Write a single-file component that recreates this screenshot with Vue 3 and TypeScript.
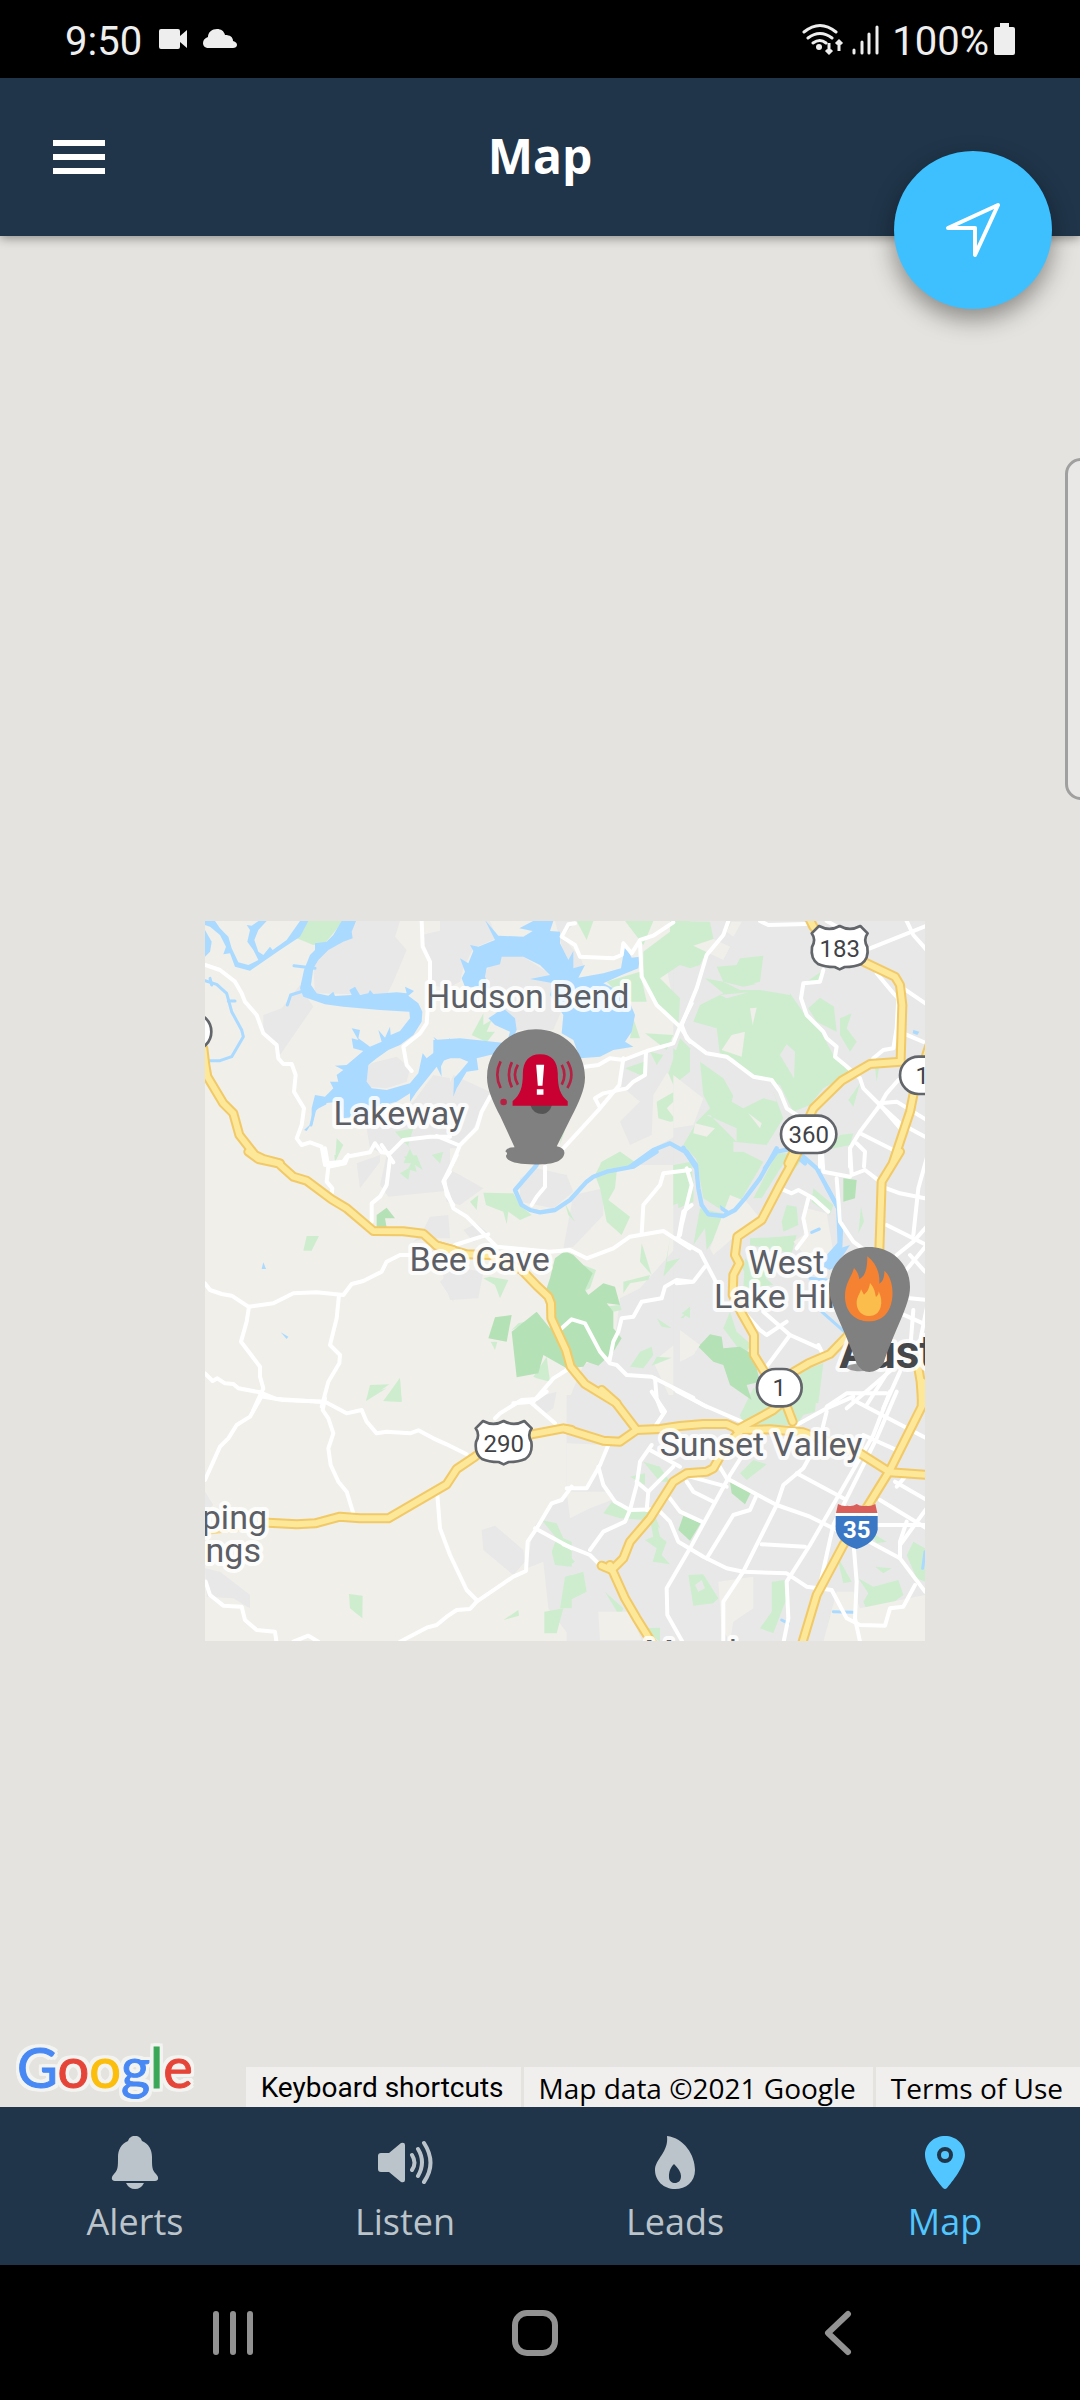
<script setup lang="ts">
import { computed } from 'vue'

type Kind = 'beige' | 'urban' | 'green' | 'forest' | 'patch' | 'clearing' | 'water'
interface Sector {
  x: number
  y: number
  areas: Partial<Record<Kind, string[]>>
  streams?: string[]
  rivers?: string[]
  roads: string[]
  highways: string[]
}

/* The map is drawn on a 2160-unit square, sector by sector; x and y shift a sector into place. */
const sectors: Sector[] = [
  {
    x: -15, y: -18,
    areas: {
      urban: [
        '465,18 600,18 585,65 620,105 580,200 560,240 345,235 340,150 380,105 440,75',
        '665,60 750,40 750,220 690,210 690,140',
        '190,300 245,280 300,210 330,260 340,275 240,420 220,385 190,360',
        '500,450 530,440 590,425 630,460 620,500 560,520 500,515',
        '500,640 560,620 640,560 700,480 750,490 750,750 600,750 560,720 510,700',
      ],
      green: [
        '310,18 430,18 375,85 340,90 290,70', '410,670 430,690 405,740',
        '585,650 640,640 625,690 650,745 610,745 630,700', '695,720 730,710 720,745',
      ],
      water: [
        '15,18 45,18 60,40 85,65 95,100 115,142 145,150 175,135 160,105 142,80 150,45 140,30 155,32 180,15 200,18 175,45 163,75 175,110 190,120 210,95 218,105 260,75 300,18 325,18 300,65 240,105 175,150 150,167 105,155 90,115 70,118 78,95 60,60 30,35 15,30',
        '15,45 35,80 30,110 15,125',
        '425,18 468,18 455,50 458,70 430,80 385,105 355,135 340,160 333,210 350,235 385,242 400,230 405,243 455,240 448,225 465,215 480,240 505,235 510,225 520,237 590,232 620,235 615,215 642,228 625,242 655,265 667,290 665,320 640,360 600,390 565,405 530,430 505,450 500,500 515,520 560,525 630,505 655,475 668,415 680,430 720,398 700,365 725,385 750,370 750,430 722,440 725,485 710,455 650,530 630,560 630,535 590,560 530,575 500,600 430,610 420,560 370,565 345,590 335,635 335,580 345,540 375,545 400,520 390,500 415,500 410,480 430,465 405,452 440,450 490,408 460,400 455,370 475,375 455,340 480,345 475,370 510,395 545,380 535,345 555,368 570,335 572,360 600,348 630,310 628,290 540,285 430,275 375,268 310,245 300,220 312,165 330,120 345,105 345,85 380,80 400,60',
        '335,625 320,648 312,645',
      ],
    },
    streams: [
      '15,197 50,208 80,235 95,290 125,345 130,365 95,425 60,437 25,437', '30,190 35,210', '85,258 105,258',
      '310,228 272,240 262,270', '282,152 345,160', '375,565 345,580 333,630',
    ],
    roads: [
      '15,150 60,165 105,200 125,235 135,260 170,300 190,355 230,390 235,430 250,447 275,447 287,480 282,530 312,580 305,630 290,670 305,690 330,682 365,695 375,750',
      '665,18 668,95 690,140 690,190 680,325 660,355 610,395 620,450 635,468',
      '385,745 430,740 440,725 510,712 525,685 545,712 570,715 610,675 690,665 750,665', '545,690 580,742',
    ],
    highways: ['10,400 16,450 22,485 70,565 100,595 118,660 165,720 190,732 240,745'],
  },
  {
    x: 705, y: -18,
    areas: {
      urban: [
        '0,18 150,18 170,70 100,100 70,160 60,200 0,230',
        '135,170 180,120 250,125 320,170 380,250 340,345 210,345 140,260',
        '345,18 410,18 365,65 420,125 430,150 400,170 370,110',
        '40,480 150,530 100,640 60,700 -20,700 -20,620',
        '550,430 620,410 750,350 750,480 680,475 640,540 635,660 570,690 540,620 600,560 540,510',
        '640,700 750,640 750,750 600,750', '680,160 750,130 750,300 700,260',
      ],
      green: [
        '410,18 460,18 440,75', '555,18 640,18 610,90',
        '610,110 690,50 700,18 750,18 750,130 660,190 720,250 715,340 650,270 610,190',
        '500,200 600,170 620,260 560,260', '580,310 600,370 570,370', '615,355 700,360 680,405',
        '720,370 750,400 750,470 700,510 685,475', '630,410 670,420 650,450', '555,460 612,440 612,485',
        '480,745 540,710 580,740', '650,560 700,532 725,560 700,560 680,580 700,605 750,575 750,610 690,620 655,610',
        '130,295 95,360 140,382 165,350 140,350 155,315 130,330', '365,650 375,645 360,690',
      ],
      water: [
        '75,215 65,190 75,170 60,130 85,145 100,108 90,90 115,95 165,75 135,15 175,62 250,65 278,48 238,40 285,15 340,18 330,48 360,50 360,85 385,135 400,108 400,160 435,150 415,188 490,175 543,160 555,90 575,128 600,125 595,160 545,180 490,205 560,240 585,300 575,350 555,380 580,395 520,405 480,425 420,430 400,375 365,355 370,300 330,240 340,205 270,192 330,180 300,150 250,125 185,125 180,148 140,158 135,185 150,220',
        '-20,375 60,370 110,375 200,385 210,350 165,330 145,310 190,280 225,310 230,345 200,410 150,420 110,430 115,465 80,470 50,520 40,545 42,490 60,470 85,440 60,430 15,430 0,460 -20,450',
      ],
    },
    rivers: ['570,755 640,705 690,685 735,710 765,750'],
    roads: [
      '405,25 385,28 365,65 405,90 420,125 520,130 545,120 550,85 575,115 600,75 640,62 700,22',
      '600,85 605,185 650,270 720,335 750,380', '720,335 755,265',
      '435,455 475,450 510,430 550,435 620,408 700,385 720,335',
      '550,430 538,510 480,580 370,700', '618,410 615,480 580,500 560,520 490,535 465,550 480,578',
      '150,545 125,590 110,640 60,690 35,750', '-10,663 55,690',
    ],
    highways: [],
  },
  {
    x: 1425, y: -18,
    areas: {
      urban: ['-20,18 760,18 760,760 -20,760'],
      green: [
        '-30,18 90,20 100,70 60,150 30,160 -30,140',
        '110,155 170,150 180,130 250,122 240,200 220,205 330,235 375,300 420,345 460,420 490,440 510,475 430,520 390,570 340,590 300,510 220,485 160,430 120,420 110,340 40,320 60,270 130,235 75,190 130,200',
        '60,440 130,490 170,560 280,530 310,610 260,690 160,680 160,745 60,745 10,690 50,620 90,580 70,540',
        '420,248 462,275 470,350 410,320 385,280', '480,310 515,295 500,340 530,380 510,410 480,360',
        '540,505 520,575 505,555', '480,660 520,655 510,690 440,705', '580,420 600,440 590,500', '-20,400 30,440 0,480 -20,470', '380,200 430,165 410,200',
      ],
      patch: [
        '40,92 100,72 150,95 130,135', '155,20 185,20 160,65 140,50', '125,405 155,360 195,350 185,425', '210,280 230,278 218,330',
        '-20,480 70,550 40,630 -20,640', '45,625 105,640 80,665 40,655', '205,595 245,625 240,640',
      ],
      clearing: [
        '300,420 320,388 345,410 342,490', '130,490 210,480 270,500 290,560 250,550 190,580 155,560 165,520', '120,240 205,232 140,250',
        '130,200 190,215 240,205 330,225 330,240 240,225 180,225', '80,600 170,640 170,680 90,600',
      ],
      water: ['700,345 718,350 712,360 698,355'],
    },
    rivers: ['10,698 45,755', '255,760 290,710 325,703 375,745'],
    roads: [
      '145,18 130,60 80,120 50,220 5,330 20,370 80,415 140,425 220,485 275,495 300,530 320,580 350,600',
      '430,165 420,200 370,205 363,250 380,300 430,350 440,370 470,395 465,425 495,450 540,490 550,520 600,570 660,625 735,665',
      '240,18 265,30 380,27', '440,18 480,40', '680,18 700,60 740,105', '570,100 740,32', '590,175 640,235 655,250', '670,220 740,268',
      '655,250 650,340 640,400 610,405 580,430', '670,355 740,385', '655,495 620,535 600,570 540,650 510,700 510,755',
      '540,655 640,705', '530,685 555,710 552,755', '600,565 650,560 740,615', '420,715 420,755', '600,570 665,645',
    ],
    highways: ['385,5 400,35 440,80 560,145 645,185 660,210 667,270 662,435', '662,440 570,447 485,497 400,580 350,690 325,745', '755,370 700,540 690,590 640,740'],
  },
  {
    x: -15, y: 702,
    areas: {
      urban: ['470,25 540,0 540,20 480,100', '560,0 750,-10 750,50 735,108 565,125 540,90', '690,185 745,180 750,250 680,250 640,260 665,235', '720,380 760,340 760,440'],
      green: [
        '600,55 625,40 635,20 610,5 650,0 668,45 645,30 650,50 630,45 625,75', '320,243 357,243 335,287 310,287', '700,0 725,0 720,25',
        '510,690 568,688 498,738', '600,668 605,740 550,738', '403,0 415,0 405,20',
      ],
      forest: ['530,180 560,158 585,190 555,190 560,218 530,218'],
      water: ['190,322 198,342 185,342', '242,532 265,545 260,552'],
    },
    roads: [
      '375,-20 385,35 380,80 397,100 395,120', '385,35 435,25 445,0', '570,10 560,90 540,125 515,145 515,200',
      '15,385 30,405 65,417 95,422 145,455 220,445 280,415 350,412 430,420 455,387 490,378 545,350 560,320 600,300 640,300',
      '147,455 140,500 123,560 180,635 180,665 190,700 160,765', '417,420 410,490 390,570 420,600 418,625 385,680 365,755',
      '15,655 38,678 52,670 75,685 100,687 115,700 180,712 230,732 360,740', '750,50 733,75 740,120 760,150',
    ],
    highways: ['145,-10 175,12 235,25 280,65 320,77 395,133 440,160 520,228 610,229 670,236 710,272 760,285'],
  },
  {
    x: 705, y: 702,
    areas: {
      urban: [
        '0,30 60,60 130,100 60,150 20,140', '240,70 290,40 380,60 400,110 340,160 240,140', '370,280 400,120 490,100 490,180 400,275',
        '540,430 600,400 750,230 750,530 640,620 700,750 380,750 430,630 520,590', '0,330 130,350 115,430 30,435', '70,225 110,205 150,240 100,260',
      ],
      green: [
        '130,113 220,115 240,150 275,180 240,195 205,170 200,208 190,170 138,150', '485,20 540,-10 590,25 530,50 525,100 505,135 570,185 545,240 500,200 480,100 465,60',
        '375,145 405,200 385,180', '90,140 115,120 110,165', '130,370 150,365 205,375 180,430 165,390', '605,265 635,360 600,320',
        '690,250 680,320 720,310 670,365', '550,380 630,360 625,375 570,385 550,415', '715,75 760,75 760,140 715,160', '600,590 635,575 640,600 610,640 570,635',
        '635,632 650,605 695,608', '650,490 695,520 665,515', '280,665 320,605 330,680 290,670', '430,330 468,345 450,400 430,410', '215,525 235,505 280,495', '152,560 172,560 165,585',
        '490,455 540,450 545,465 520,470', '725,475 750,455 750,490',
      ],
      forest: [
        '345,310 375,288 400,300 430,330 458,355 435,405 445,420 490,385 525,395 540,450 500,445 520,470 520,520 545,550 520,590 475,632 440,620 430,635 380,640 310,600 295,655 230,667 215,530 290,470 330,520 320,400 330,370',
        '165,487 215,480 200,560 145,550',
      ],
    },
    rivers: ['290,30 225,105 245,150 270,165 300,172 345,165 390,135 440,80 460,65 500,50 580,35 650,-10'],
    roads: [
      '50,0 10,80 40,160 80,185 145,250 170,275 330,290 390,285 440,310 520,280 570,245 670,228 750,280', '45,270 145,238', '315,35 315,95 290,125 275,150',
      '605,235 610,150 660,90 670,55 750,45', '715,250 730,170 755,150', '365,520 395,493 435,505 480,590 510,625 530,630 560,660 635,665 760,728',
      '508,620 520,560 535,530 545,490 580,485 605,440 665,430 675,395 710,375 755,380', '380,645 340,670 280,740 220,745', '645,670 650,730 665,770',
    ],
    highways: ['-10,272 80,298 150,300 245,345 290,392 325,425 333,445 334,490 378,585 392,635 435,687 530,745'],
  },
  {
    x: 1425, y: 702,
    areas: {
      urban: ['-20,0 760,0 760,760 -20,760'],
      green: [
        '45,-10 190,-10 250,20 180,140 140,175 70,130', '-20,30 35,20 40,130 -20,150', '60,160 150,180 80,285 75,220 40,270', '320,150 350,155 355,210 310,230 305,200',
        '210,250 300,245 350,240 335,295 210,270', '195,310 280,390 190,400', '130,520 150,470 170,530 215,570 190,600', '543,155 552,200 535,235', '360,650 430,625 415,745 360,745',
        '400,100 460,150 450,180 395,140', '0,490 35,460 10,490', '290,-5 330,-5 245,130 220,130', '180,330 250,320 270,370 200,360', '340,-5 370,10 330,60',
      ],
      forest: ['490,70 530,75 525,130 490,140', '55,575 90,538 125,545 130,580 180,575 220,600 240,680 200,690 215,735 150,690 130,630 100,620'],
      patch: ['150,120 200,140 240,190 170,240 100,300 90,280', '380,160 440,175 460,290 400,330 340,260 370,240', '0,525 60,570 40,600 0,620'],
      water: ['440,300 480,255 480,280 510,270 490,300 450,345 430,335', '120,150 150,170 140,178 122,165'],
    },
    streams: ['395,232 418,222', '390,370 440,375', '425,470 510,545', '725,670 740,720'],
    rivers: ['20,-10 48,30 55,100 65,150 85,178 130,183 165,165 195,130 240,70 290,-20', '370,5 410,40 440,95 475,160 483,220 480,290 455,335', '440,95 475,160 480,290'],
    roads: [
      '-10,250 60,290 110,385', '-10,385 40,380 75,335', '20,40 35,90 5,210 0,240', '300,100 335,115 355,105 400,130 445,170', '385,130 370,190 380,240 350,280',
      '425,-20 430,50 510,65', '510,-20 515,60 555,45 600,80', '470,70 480,200 520,260 560,290', '605,95 660,115 735,130', '740,10 715,100 700,240', '620,210 740,270',
      '740,215 700,260 650,300', '740,270 650,380', '690,300 735,350', '690,430 740,435', '250,470 330,540 420,580', '190,470 240,525 260,540 320,500', '330,540 260,635',
      '650,470 740,510', '700,465 690,590', '630,640 560,750', '640,640 500,760', '415,570 430,600', '660,650 610,760', '740,460 720,560', '-10,708 80,755', '440,755 500,715 620,715',
    ],
    highways: ['660,-10 605,80 598,290 560,470 500,545 450,597 385,625 300,675', '355,-10 300,90 245,195 172,245 165,300 178,325 160,360 158,420 185,475 222,540 222,600 262,665', '710,610 722,680 727,750'],
  },
  {
    x: -15, y: 1422,
    areas: {
      urban: [
        '845,405 885,392 970,465 975,500 940,540 850,465', '1000,400 1050,330 1120,300 1120,738 1045,640 1030,500 980,520', '15,520 60,530 150,600 150,640 100,610 20,605',
        '15,290 40,330 15,350', '1000,10 1070,-10 1060,40 1030,60',
      ],
      green: [
        '447,597 488,602 487,670 450,640', '910,675 955,645 957,662', '1025,375 1070,385 1090,430 1115,440 1115,515 1065,510 1055,470 1070,430', '1095,545 1115,540 1115,640 1080,640', '1033,650 1090,640 1070,715 1033,715',
        '498,18 510,-5 560,-20', '550,18 600,-40 605,20',
      ],
    },
    roads: [
      '190,5 250,15 375,20 440,55 485,45 500,80 530,115 560,110 630,115 655,106 700,130 740,148 800,178', '187,0 150,65 110,90 85,130 60,155 15,255',
      '375,10 368,45 385,70 400,115 385,160 392,210 415,260 440,290 460,355', '885,70 900,55 965,15 1010,12 1040,-10', '990,20 1065,85',
      '712,300 720,400 750,480 800,585 830,615', '1115,275 1085,315 1055,325 1010,400 983,440 978,528 940,545 830,620 810,642 770,645 740,665 710,690 680,698 600,740',
      '1005,400 1115,460', '17,560 30,600 70,632 125,635 135,675 170,705 225,710 230,745', '280,740 325,722 355,740',
    ],
    highways: ['205,383 290,388 345,385 420,365 480,370 565,370 740,268 770,222 825,185 870,150 995,118 1090,100 1115,105'],
  },
  {
    x: 1095, y: 1422,
    areas: {
      urban: ['-10,0 1070,0 1070,745 -10,745'],
      patch: ['-10,145 110,150 50,280 -10,280', '-10,290 110,290 125,315 60,340 0,370', '85,650 180,650 215,735 90,735', '445,560 550,545 550,640 490,680 480,740 455,700', '800,590 850,590 870,640 1065,600 1065,740 760,740'],
      green: [
        '510,60 550,-20 700,0 740,0 735,50 700,60 680,90 520,90', '510,235 550,195 590,208 530,255', '100,355 125,322 160,335 250,350 270,400 225,375 150,370', '225,435 250,425 240,375 262,390 270,425 290,440 275,480 300,508 248,500 260,460',
        '355,540 400,538 445,610 430,625 370,632', '605,560 645,555 650,610 610,715 570,700 605,650', '865,550 910,575 985,555 1000,600 960,630 910,635 895,655 880,620 895,595', '-10,545 40,530 50,590 -10,620',
        '105,590 160,640 150,665', '215,700 270,698 270,740', '800,480 845,560 820,565', '1010,480 1030,440 1065,460 1065,560 1040,550', '900,410 950,440 920,445', '770,710 780,660 795,690', '220,200 270,215 300,260 270,260', '-10,475 15,500 -10,515', '520,630 545,595 550,625', '915,515 965,520 940,535',
        '180,245 225,235 225,270',
      ],
      forest: ['480,262 542,293 525,328 485,295', '340,362 392,385 360,437 325,405'],
      clearing: ['375,570 395,555 405,580 385,590'],
    },
    streams: ['790,650 850,652', '1065,470 1058,520', '635,675 655,685'],
    roads: [
      '245,-10 285,50 255,95', '310,-20 400,30 515,80', '115,150 90,210 50,280 -10,280', '85,215 100,270 135,320 180,345 260,343', '260,340 300,380 325,440 400,485 470,520 520,530 650,535 710,575 785,585 830,670 870,690 945,692 960,640 1000,635 1035,570',
      '245,150 210,200 200,270 180,345 165,380 100,410 60,465', '-20,448 60,480 100,520', '240,165 330,215', '440,200 470,250 620,330 720,365 800,405', '515,185 480,240 360,460 290,580 292,660 340,745',
      '770,50 750,130 700,220 640,270 620,330 520,530 460,620 460,745', '960,-10 910,120 720,450 650,560 655,670 640,745', '980,-10 920,130 790,390 750,570', '680,235 820,310', '850,15 1070,130', '560,300 540,345 490,360 410,490', '575,448 705,455',
      '300,310 330,350 395,380', '350,260 370,290 430,320', '200,260 235,290 230,345', '235,290 310,215', '360,245 470,275', '850,440 860,560 855,670 870,740', '870,425 990,490 1065,590', '990,490 990,440 1010,380', '920,390 1070,390',
      '930,315 1070,400', '975,260 1070,315', '880,120 990,170', '1070,340 990,450', '680,90 770,40 850,5', '960,230 1010,240 980,275',
    ],
    highways: [
      '95,-15 135,20 200,105', '-10,103 100,137 150,140 200,105 270,102 330,93 400,87 470,87 510,105 600,103 700,112 870,175 960,232 1075,240', '500,105 610,45 640,20', '645,20 668,80',
      '1057,-40 1055,35 960,225 895,330 820,450 740,600 695,750', '520,100 470,150 430,220 410,230 350,235 310,260 240,370 180,440 160,490 125,525 95,512', '120,510 165,610 200,670 250,750',
    ],
  },
]

const kinds: Kind[] = ['urban', 'green', 'forest', 'patch', 'clearing', 'water']
const areas = computed(() =>
  kinds.flatMap((kind) => sectors.flatMap((s) => (s.areas[kind] ?? []).map((points) => ({ kind, points, shift: `translate(${s.x} ${s.y})` })))),
)
function lines(key: 'streams' | 'rivers' | 'roads' | 'highways') {
  return sectors.flatMap((s) => (s[key] ?? []).map((points) => ({ points, shift: `translate(${s.x} ${s.y})` })))
}
const layers = [
  { name: 'stream', lines: lines('streams') },
  { name: 'river', lines: lines('rivers') },
  { name: 'road', lines: lines('roads') },
  { name: 'highway-edge', lines: lines('highways') },
  { name: 'highway', lines: lines('highways') },
]

const places = [
  { text: 'Hudson Bend', x: 968, y: 262, anchor: 'middle' },
  { text: 'Lakeway', x: 583, y: 612, anchor: 'middle' },
  { text: 'Bee Cave', x: 824, y: 1050, anchor: 'middle' },
  { text: 'West', x: 1744, y: 1060, anchor: 'middle' },
  { text: 'Lake Hills', x: 1527, y: 1162, anchor: 'start' },
  { text: 'Sunset Valley', x: 1668, y: 1604, anchor: 'middle' },
  { text: 'ping', x: 186, y: 1824, anchor: 'end' },
  { text: 'ngs', x: 168, y: 1922, anchor: 'end' },
  { text: 'Manchaca', x: 1318, y: 2229, anchor: 'start' },
]
const usShields = [{ text: '183', x: 1904, y: 78 }, { text: '290', x: 896, y: 1563 }]
const stateShields = [
  { text: '360', x: 1811, y: 640, w: 172 },
  { text: '1', x: 1723, y: 1400, w: 140 },
  { text: '1', x: 2152, y: 463, w: 140 },
  { text: '', x: -48, y: 332, w: 140 },
]
const tabs = ['Alerts', 'Listen', 'Leads', 'Map']
</script>

<template>
  <div class="app">
    <div class="status">
      <div class="status-left">
        <span class="status-text">9:50</span>
        <svg class="cam" width="28" height="20" viewBox="0 0 28 20"><path d="M2 0h17q2 0 2 2v5l7-6v18l-7-6v5q0 2-2 2H2q-2 0-2-2V2q0-2 2-2z" /></svg>
        <svg class="cloud" width="34" height="20" viewBox="0 0 34 20"><path d="M6 19C2 19 0 17 0 14c0-3 2-5 5-6C5 3 9 0 14 0c4 0 7 2 8 6 5 0 8 2 8 6 3 1 4 2 4 4s-2 3-4 3z" /></svg>
      </div>
      <div class="status-right">
        <svg class="wifi" width="42" height="33" viewBox="0 0 42 33">
          <path d="M2 9Q18-4 34 9M6 15q12-9 24 0M11 20q7-5 13 0" fill="none" stroke="#eee" stroke-width="3" stroke-linecap="round" />
          <circle cx="17" cy="24" r="3" />
          <path d="M27 20v10m-3-3 3 3 3-3M37 28V18m-3 3 3-3 3 3" fill="none" stroke="#eee" stroke-width="3" />
        </svg>
        <svg class="signal" width="28" height="31" viewBox="0 0 28 31"><path d="M2 26v3M10 18v11M17 10v19M25 3v26" stroke="#eee" stroke-width="3" stroke-linecap="round" /></svg>
        <span class="status-text">100%</span>
        <svg width="21" height="32" viewBox="0 0 21 32"><path d="M6 0h9v4h4q2 0 2 2v24q0 2-2 2H2q-2 0-2-2V6q0-2 2-2h4z" /></svg>
      </div>
    </div>

    <header class="bar">
      <button class="menu" aria-label="Menu"><i></i><i></i><i></i></button>
      <h1>Map</h1>
    </header>
    <button class="locate" aria-label="Centre on my location">
      <svg width="56" height="56" viewBox="0 0 56 56"><path d="M3 26 53 3 30 53V26z" fill="none" stroke="#fff" stroke-width="4" stroke-linejoin="round" /></svg>
    </button>

    <main class="map">
      <div class="edge-panel"></div>
      <div class="tile">
        <svg class="ground" viewBox="0 0 2160 2160">
          <rect width="2160" height="2160" fill="#f0efea" />
          <polygon v-for="(a, i) in areas" :key="'a' + i" :class="a.kind" :points="a.points" :transform="a.shift" />
          <g v-for="layer in layers" :key="layer.name" :class="layer.name">
            <polyline v-for="(l, i) in layer.lines" :key="i" :points="l.points" :transform="l.shift" />
          </g>
          <polyline class="faint" points="0,1838 105,1826" />
          <text v-for="p in places" :key="p.text" class="place" :x="p.x" :y="p.y" :text-anchor="p.anchor">{{ p.text }}</text>
          <text class="place city" x="1903" y="1342">Austin</text>
          <g v-for="s in usShields" :key="s.text" :transform="`translate(${s.x} ${s.y})`">
            <path class="sign" d="M-62-63Q-30-46 0-63 30-46 62-63L84-41Q70-22 83 0 88 35 65 51 45 60 15 60L0 67-15 60Q-45 60-65 51-88 35-83 0-70-22-84-41z" />
            <text class="route" y="31">{{ s.text }}</text>
          </g>
          <g v-for="s in stateShields" :key="s.x" :transform="`translate(${s.x} ${s.y})`">
            <rect class="sign" :x="-s.w / 2 + 3" y="-56" :width="s.w - 6" height="112" rx="56" />
            <text class="route" y="26">{{ s.text }}</text>
          </g>
          <g transform="translate(1955 1816)">
            <path d="M-56-67Q-40-58-28-62-12-58 0-67 12-58 28-62 40-58 56-67L62-40H-62z" fill="#d9605a" />
            <path d="M-64-40H64V-32H-64z" fill="#fff" />
            <path d="M-63-31H63V10Q55 50 0 68-55 50-63 10z" fill="#3a78c6" />
            <text class="route interstate" y="35">35</text>
          </g>
        </svg>
        <button class="pin alert-pin" aria-label="Alert">
          <svg width="98" height="136" viewBox="140 343 295 408">
            <path d="M287 343C370 343 435 405 435 488 435 525 415 565 395 605L350 695Q374 700 373 716C370 738 345 750 285 750 225 750 198 740 197 724Q205 716 195 710 200 698 223 698L180 605C160 565 140 525 140 488 140 405 205 343 287 343z" fill="#808080" />
            <path d="M270 570q8 28 38 28 20-2 28-28z" fill="#555" />
            <path d="M300 418C335 418 352 440 353 475 353 520 360 540 383 560V573H217V560C240 540 248 520 248 475 249 440 266 418 300 418z" fill="#c90032" />
            <path d="M288 450h24l-5 63h-14zM290 524h20v16h-20z" fill="#fff" />
            <g fill="none" stroke="#b52043" stroke-width="8"><path d="M181 440q-20 40 0 80M215 442q-18 38 0 76M233 450q-18 30 0 60M382 440q24 40 0 80M365 450q16 30 0 60" /></g>
            <circle cx="190" cy="562" r="10" fill="#b52043" />
          </svg>
        </button>
        <button class="pin fire-pin" aria-label="Fire">
          <svg width="81" height="125" viewBox="447 275 243 375">
            <ellipse cx="550" cy="636" rx="50" ry="12" fill="#777" opacity="0.7" />
            <path d="M567 275C635 275 690 325 690 395 690 450 645 520 610 625Q590 650 568 650 545 650 530 625C495 520 447 450 447 395 447 325 500 275 567 275z" fill="#808080" />
            <path d="M562 303C590 325 600 355 598 385 610 380 614 360 613 346 630 360 640 390 637 425 632 475 605 498 567 498 525 498 496 470 495 425 494 385 515 365 522 338 535 352 537 365 538 372 560 360 562 330 562 303z" fill="#f58232" />
            <path d="M570 383C585 400 585 415 588 425 595 420 596 414 596 408 604 425 606 440 602 455 596 474 585 482 567 482 545 482 530 465 530 443 530 425 540 416 543 402L552 418Q568 405 570 383z" fill="#fbbd4b" />
          </svg>
        </button>
      </div>
      <div class="credits">
        <a class="google" href="#" aria-label="Google"><span class="b">G</span><span class="r">o</span><span class="y">o</span><span class="b">g</span><span class="g">l</span><span class="r">e</span></a>
        <button class="credit shortcuts">Keyboard shortcuts</button>
        <span class="credit">Map data ©2021 Google</span>
        <a class="credit" href="#">Terms of Use</a>
      </div>
    </main>

    <nav class="tabs">
      <a v-for="t in tabs" :key="t" href="#" :class="{ active: t === 'Map' }">
        <svg v-if="t === 'Alerts'" width="56" height="56" viewBox="0 0 56 56"><path d="M28 1c4 0 6 2 7 5 7 3 10 9 10 16 0 10 0 13 4 17 3 3 3 7-1 7H8c-4 0-4-4-1-7 4-4 4-7 4-17 0-7 3-13 10-16 1-3 3-5 7-5zM19 48h18q-3 6-9 6t-9-6z" /></svg>
        <svg v-else-if="t === 'Listen'" width="56" height="56" viewBox="0 0 56 56">
          <path d="M4 18h8L24 8q4-1 4 2v35q0 3-4 2L12 37H4q-3 0-3-3V21q0-3 3-3z" />
          <path d="M35 20q5 8 0 15M41 14q8 13 0 27M47 8q13 20 0 39" fill="none" stroke="currentColor" stroke-width="4" stroke-linecap="round" />
        </svg>
        <svg v-else-if="t === 'Leads'" width="56" height="56" viewBox="0 0 56 56"><path fill-rule="evenodd" d="M20 1C37 3 48 20 48 35 48 47 39 54 28 54S8 46 8 35C8 24 22 17 20 1zM27 29C22 34 22 39 22 42 22 46 25 48 28 48S34 46 34 41C34 37 31 33 27 29z" /></svg>
        <svg v-else width="56" height="56" viewBox="0 0 56 56"><path fill-rule="evenodd" d="M28 1C39 1 48 9 48 20 48 31 35 47 30 53Q28 55 26 53C21 47 8 31 8 20 8 9 17 1 28 1zM28 12a8 8 0 1 0 0 16 8 8 0 1 0 0-16z" /><circle cx="28" cy="20" r="4" /></svg>
        <span>{{ t }}</span>
      </a>
    </nav>

    <div class="system">
      <button aria-label="Recent apps"><svg width="46" height="46" viewBox="0 0 46 46"><path d="M6 4v38M23 4v38M40 4v38" /></svg></button>
      <button aria-label="Home"><svg width="46" height="46" viewBox="0 0 46 46"><rect x="3" y="3" width="40" height="40" rx="12" /></svg></button>
      <button aria-label="Back"><svg width="46" height="46" viewBox="0 0 46 46"><path d="M33 4 13 23l20 19" /></svg></button>
    </div>
  </div>
</template>

<style>
body { margin: 0; background: #000; }
</style>

<style scoped>
.app { position: relative; display: flex; flex-direction: column; min-height: 100vh; font-family: "Open Sans", "Noto Sans", sans-serif; background: #000; }
button { border: 0; padding: 0; background: none; font: inherit; color: inherit; cursor: pointer; }
a { text-decoration: none; color: inherit; }
svg { display: block; }

.status { display: flex; justify-content: space-between; height: 78px; padding: 0 65px; background: #000; color: #eee; font-family: Roboto, sans-serif; font-size: 40px; line-height: 47px; }
.status svg { fill: #eee; }
.status-left, .status-right { display: flex; align-items: center; }
.status-text { padding-top: 5px; }
.cam { margin-left: 17px; }
.cloud { margin-left: 16px; }
.signal { margin: 0 12px 0 8px; }
.status-right .status-text { margin-right: 5px; }

.bar { position: relative; z-index: 1; display: grid; grid-template-columns: 1fr auto 1fr; align-items: center; height: 158px; padding: 0 53px; background: #20354a; color: #fff; box-shadow: 0 2px 10px rgba(0, 0, 0, 0.4); box-sizing: border-box; }
.menu { display: flex; flex-direction: column; gap: 8px; width: 52px; }
.menu i { height: 6px; background: #fff; }
h1 { margin: 0; padding-bottom: 2px; font-size: 48px; line-height: 64px; font-weight: 700; }
.locate { position: absolute; z-index: 2; top: 151px; right: 28px; display: flex; align-items: center; justify-content: center; width: 158px; height: 158px; border-radius: 50%; background: #3ec0ff; box-shadow: 0 10px 24px rgba(0, 0, 0, 0.4); }

.map { position: relative; flex: 1; display: flex; flex-direction: column; justify-content: flex-end; overflow: hidden; background: #e4e3df; }
.edge-panel { position: absolute; top: 222px; right: -8px; width: 17px; height: 336px; border: 3px solid #a0a0a0; border-radius: 16px 0 0 16px; background: #e9e8e6; }
.tile { position: absolute; left: calc(50% - 335px); top: calc(50% - 251px); width: 720px; height: 720px; }
.ground { width: 100%; height: 100%; overflow: hidden; }
.urban, .clearing { fill: #e8e8e8; }
.green { fill: #ceedcf; }
.forest { fill: #b5e1b6; }
.patch { fill: #f0efea; }
.water { fill: #aadaff; }
.ground polyline { fill: none; stroke-linecap: round; stroke-linejoin: round; }
.stream { stroke: #aadaff; stroke-width: 9; }
.river { stroke: #aadaff; stroke-width: 13; }
.road { stroke: #fff; stroke-width: 12; }
.highway-edge { stroke: #f1c967; stroke-width: 30; }
.highway { stroke: #fde799; stroke-width: 18; }
.faint { stroke: #f5d98f; stroke-width: 8; }
.place { font-family: Roboto, sans-serif; font-size: 102px; fill: #5c6066; stroke: #fff; stroke-opacity: 0.85; stroke-width: 24px; stroke-linejoin: round; paint-order: stroke; }
.city { font-size: 138px; font-weight: 700; fill: #45474a; }
.sign { fill: #fff; stroke: #626569; stroke-width: 8; stroke-linejoin: round; }
.route { font-family: Roboto, sans-serif; font-size: 72px; fill: #3f4246; text-anchor: middle; }
.interstate { font-weight: 700; fill: #fff; }
.pin { position: absolute; }
.alert-pin { left: 282px; top: 108px; }
.fire-pin { left: 624px; top: 326px; }

.credits { display: flex; align-items: flex-end; gap: 3px; font-size: 28px; line-height: 40px; color: #000; }
.google { margin-right: auto; padding: 0 0 6px 17px; font-family: Lato, sans-serif; font-size: 56px; line-height: 68px; -webkit-text-stroke: 1px currentColor; filter: drop-shadow(3px 0 0 #f3f3f1) drop-shadow(-3px 0 0 #f3f3f1) drop-shadow(0 3px 0 #f3f3f1) drop-shadow(0 -3px 0 #f3f3f1); }
.b { color: #4788f4; }
.r { color: #e54538; }
.y { color: #fbbe0d; }
.g { color: #3aa757; }
.credit { height: 40px; padding: 0 17px 0 15px; background: #f0efee; white-space: nowrap; line-height: 42px; }
.shortcuts { font-family: Roboto, sans-serif; }

.tabs { display: grid; grid-template-columns: repeat(4, 1fr); height: 158px; background: #20354a; color: #bcc4cb; }
.tabs a { display: flex; flex-direction: column; align-items: center; gap: 6px; padding-top: 28px; font-size: 36px; line-height: 49px; }
.tabs svg { fill: currentColor; }
.tabs .active { color: #52c6ff; }

.system { display: grid; grid-template-columns: repeat(3, 1fr); height: 135px; padding: 0 91px 0 82px; background: #000; }
.system button { display: flex; align-items: center; justify-content: center; }
.system svg { fill: none; stroke: #929292; stroke-width: 6; stroke-linecap: round; stroke-linejoin: round; }
</style>
